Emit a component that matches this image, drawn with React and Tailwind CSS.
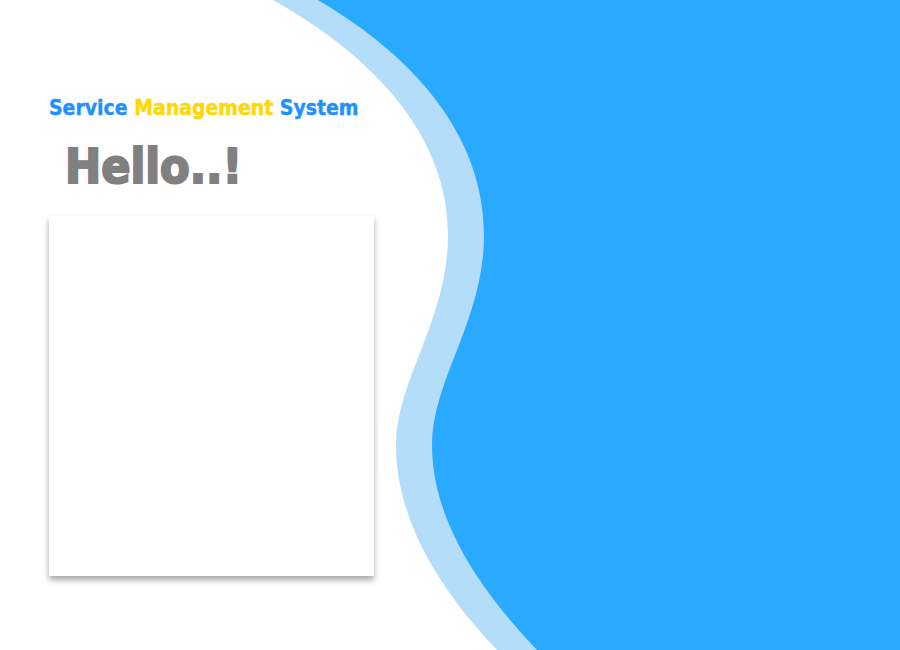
import React from 'react';

function Waves() {
    return (
        <svg className="absolute inset-0" width="900" height="650" viewBox="0 0 900 650">
            <path
                d="M273,0 C380,60 448,140 448,235 C448,320 396,380 396,445 C396,520 440,590 497,650 L900,650 L900,0 Z"
                fill="#b3ddf9"
            />
            <path
                d="M318,0 C420,60 484,140 484,235 C484,320 432,380 432,445 C432,520 480,590 537,650 L900,650 L900,0 Z"
                fill="#29aaff"
            />
        </svg>
    );
}

const heavy = { fontFamily: '"DejaVu Sans Condensed", "DejaVu Sans", sans-serif', fontStretch: 'condensed' };

export default function App() {
    return (
        <div className="relative w-[900px] h-[650px] overflow-hidden bg-white">
            <Waves />
            <div className="relative flex flex-col pl-[49px] pt-[94px]">
                <h1 className="text-[21px] font-bold leading-[28px] [-webkit-text-stroke:0.4px]" style={heavy}>
                    <span className="text-[#1e90ff]">Service </span>
                    <span className="text-[#ffd800]">Management </span>
                    <span className="text-[#1e90ff]">System</span>
                </h1>
                <h2 className="mt-[14px] ml-[16px] text-[48px] font-bold leading-[60px] text-[#808080] [-webkit-text-stroke:2px]" style={heavy}>
                    Hello..!
                </h2>
                <div className="mt-[20px] w-[325px] h-[360px] bg-white shadow-[0_4px_6px_rgba(0,0,0,0.35)]"></div>
            </div>
        </div>
    );
}
